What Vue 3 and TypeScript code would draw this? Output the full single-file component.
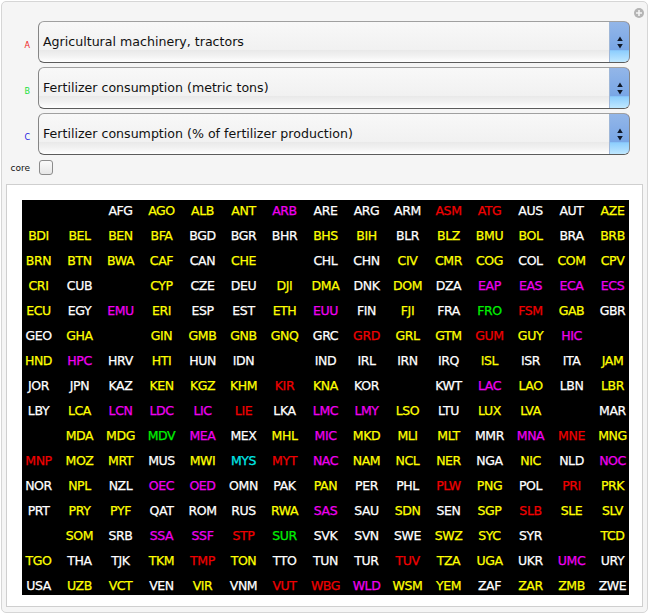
<script setup lang="ts">
interface Cell { code: string; tone: string }

const selects = [
  { key: 'A', tone: 'a', text: 'Agricultural machinery, tractors' },
  { key: 'B', tone: 'b', text: 'Fertilizer consumption (metric tons)' },
  { key: 'C', tone: 'c', text: 'Fertilizer consumption (% of fertilizer production)' },
]

const raw = `_ _ AFGw AGOy ALBy ANTy ARBm AREw ARGw ARMw ASMr ATGr AUSw AUTw AZEy
BDIy BELy BENy BFAy BGDw BGRw BHRw BHSy BIHy BLRw BLZy BMUy BOLy BRAw BRBy
BRNy BTNy BWAy CAFy CANw CHEy _ CHLw CHNw CIVy CMRy COGy COLw COMy CPVy
CRIy CUBw _ CYPy CZEw DEUw DJIy DMAy DNKw DOMy DZAw EAPm EASm ECAm ECSm
ECUy EGYw EMUm ERIy ESPw ESTw ETHy EUUm FINw FJIy FRAw FROg FSMr GABy GBRw
GEOw GHAy _ GINy GMBy GNBy GNQy GRCw GRDr GRLy GTMy GUMr GUYy HICm _
HNDy HPCm HRVw HTIy HUNw IDNw _ INDw IRLw IRNw IRQw ISLy ISRw ITAw JAMy
JORw JPNw KAZw KENy KGZy KHMy KIRr KNAy KORw _ KWTw LACm LAOy LBNw LBRy
LBYw LCAy LCNm LDCm LICm LIEr LKAw LMCm LMYm LSOy LTUw LUXy LVAy _ MARw
_ MDAy MDGy MDVg MEAm MEXw MHLy MICm MKDy MLIy MLTy MMRw MNAm MNEr MNGy
MNPr MOZy MRTy MUSw MWIy MYSc MYTr NACm NAMy NCLy NERy NGAw NICy NLDw NOCm
NORw NPLy NZLw OECm OEDm OMNw PAKw PANy PERw PHLw PLWr PNGy POLw PRIr PRKy
PRTw PRYy PYFy QATw ROMw RUSw RWAy SASm SAUw SDNy SENw SGPy SLBr SLEy SLVy
_ SOMy SRBw SSAm SSFm STPr SURg SVKw SVNw SWEw SWZy SYCy SYRw _ TCDy
TGOy THAw TJKw TKMy TMPr TONy TTOw TUNw TURw TUVr TZAy UGAy UKRw UMCm URYw
USAw UZBy VCTy VENw VIRy VNMw VUTr WBGr WLDm WSMy YEMy ZAFw ZARy ZMBy ZWEw`

const cells: Cell[] = raw.split(/\s+/).map((t) =>
  t === '_' ? { code: '', tone: 'w' } : { code: t.slice(0, 3), tone: t[3] },
)
</script>

<template>
  <div class="panel">
    <svg class="close" width="12" height="12" viewBox="0 0 12 12">
      <circle cx="6" cy="6" r="5" fill="#b4b4b4" />
      <path d="M6 3v6M3 6h6" stroke="#f4f4f4" stroke-width="1.6" />
    </svg>
    <div class="controls">
      <template v-for="s in selects" :key="s.key">
        <span class="key" :class="s.tone">{{ s.key }}</span>
        <div class="select">
          <span class="value">{{ s.text }}</span>
          <span class="stepper">
            <svg width="6" height="13" viewBox="0 0 6 13">
              <path d="M3 .5 5.8 5H.2zM3 12.5.2 8h5.6z" fill="#101828" />
            </svg>
          </span>
        </div>
      </template>
      <span class="core">core</span>
      <span class="check"></span>
    </div>
    <div class="output">
      <div class="codes">
        <div class="grid">
          <span v-for="(c, i) in cells" :key="i" class="cell" :class="'t-' + c.tone">{{ c.code }}</span>
        </div>
      </div>
    </div>
  </div>
</template>

<style>
html, body { background: #fff; }
</style>

<style scoped>
.panel {
  position: relative;
  width: 647px;
  height: 612px;
  box-sizing: border-box;
  margin: 1px 0 0 1px;
  padding: 19px 4px 6px;
  background: #f5f5f5;
  border: 1px solid #d6d6d6;
  border-radius: 5px;
  font-family: "DejaVu Sans", sans-serif;
  color: #111;
}
.close { position: absolute; top: 5px; right: 2px; }
.controls {
  display: grid;
  grid-template-columns: 26px 592px;
  column-gap: 6px;
  row-gap: 4px;
  align-items: center;
}
.key { font-size: 8px; text-align: right; padding-top: 6px; padding-right: 2px; }
.a { color: #f01818; }
.b { color: #20e040; }
.c { color: #1818e0; }
.select {
  display: flex;
  justify-content: space-between;
  height: 42px;
  box-sizing: border-box;
  border: 1px solid #858585;
  border-top-color: #a0a0a0;
  border-bottom-color: #5c5c5c;
  border-radius: 6px;
  overflow: hidden;
  background: linear-gradient(#f8f8f8 0, #f1f1f1 70%, #e9e9e9 71%, #f2f2f2 85%, #fff 100%);
}
.value { padding: 11px 0 0 4px; font-size: 12.6px; line-height: 18px; }
.stepper {
  width: 19px;
  display: flex;
  align-items: center;
  justify-content: center;
  border-left: 1px solid #9fb7d8;
  border-top: 1px solid #1a2a80;
  border-right: 1px solid #2a55c0;
  margin: -1px -1px -1px 0;
  border-radius: 0 6px 6px 0;
  background: linear-gradient(#93b6e8 0, #78a6e6 68%, #8ccdfd 70%, #c4eaff 100%);
}
.core { font-size: 9px; text-align: right; padding-right: 2px; padding-top: 1px; }
.check {
  width: 12px;
  height: 13px;
  margin: 1px 0 0 1px;
  border: 1px solid #8c8c8c;
  border-radius: 3px;
  background: linear-gradient(#fafafa, #e6e6e6);
}
.output {
  margin-top: 9px;
  height: 423px;
  box-sizing: border-box;
  padding: 15px 15px 0 15px;
  background: #fff;
  border: 1px solid #cfcfcf;
}
.codes {
  width: 607px;
  height: 395px;
  background: #000;
  display: flex;
  justify-content: center;
  align-items: center;
}
.grid {
  display: grid;
  flex: none;
  grid-template-columns: repeat(15, 41px);
  grid-auto-rows: 25px;
  font-size: 12.5px;
  font-weight: 500;
  letter-spacing: -0.4px;
  -webkit-text-stroke: 0.25px currentColor;
}
.cell { text-align: center; line-height: 25px; white-space: nowrap; }
.t-w { color: #fff; }
.t-y { color: #ffff00; }
.t-m { color: #f000f0; }
.t-r { color: #f00000; }
.t-g { color: #00f000; }
.t-c { color: #00e8e8; }
</style>
